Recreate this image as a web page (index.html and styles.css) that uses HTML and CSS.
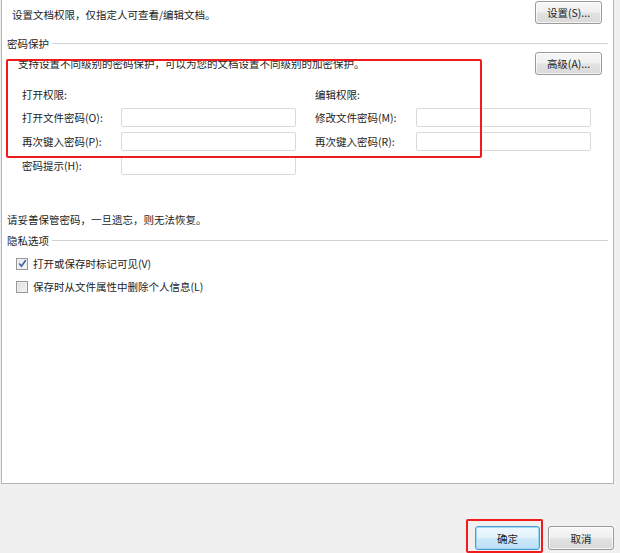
FILE: index.html
```html
<!DOCTYPE html>
<html lang="zh-CN">
<head>
<meta charset="utf-8">
<link rel="stylesheet" href="styles.css">
</head>
<body>
<div class="panel">
  <div class="top-row">
    <span class="txt">设置文档权限，仅指定人可查看/编辑文档。</span>
    <button class="btn">设置(S)...</button>
  </div>
  <div class="section-title sec1"><span>密码保护</span><i></i></div>
  <div class="pw-head">
    <span class="txt">支持设置不同级别的密码保护，可以为您的文档设置不同级别的加密保护。</span>
    <button class="btn">高级(A)...</button>
  </div>
  <div class="pw-grid">
    <span class="lbl">打开权限:</span><span></span><span></span><span class="lbl">编辑权限:</span><span></span>
    <span class="lbl">打开文件密码(O):</span><span class="inp"></span><span></span><span class="lbl">修改文件密码(M):</span><span class="inp"></span>
    <span class="lbl">再次键入密码(P):</span><span class="inp"></span><span></span><span class="lbl">再次键入密码(R):</span><span class="inp"></span>
    <span class="lbl">密码提示(H):</span><span class="inp"></span><span></span><span></span><span></span>
  </div>
  <div class="warn">请妥善保管密码，一旦遗忘，则无法恢复。</div>
  <div class="section-title sec2"><span>隐私选项</span><i></i></div>
  <label class="chk-row first"><span class="chk checked"><svg viewBox="0 0 9 9" width="9" height="9"><path d="M1.2 4.6 L3.4 7.2 L7.8 1.2" fill="none" stroke="#3a5f9e" stroke-width="1.6"/></svg></span><span>打开或保存时标记可见(V)</span></label>
  <label class="chk-row"><span class="chk"></span><span>保存时从文件属性中删除个人信息(L)</span></label>
  <div class="mark mark-pw"></div>
</div>
<div class="footer">
  <div class="ok-wrap">
    <button class="btn btn-default">确定</button>
    <div class="mark mark-ok"></div>
  </div>
  <button class="btn btn-cancel">取消</button>
</div>
</body>
</html>
```
FILE: styles.css
```css
* { box-sizing: border-box; }
html, body {
  margin: 0;
  padding: 0;
  background: #f0f0f0;
  font-family: "Noto Sans CJK SC", "Microsoft YaHei", sans-serif;
  font-size: 10.5px;
  color: #1c1c1c;
  width: 620px;
  height: 553px;
  overflow: hidden;
}
.panel {
  position: relative;
  margin-left: 1px;
  width: 613px;
  height: 484px;
  background: #ffffff;
  border-left: 1px solid #b4b4bc;
  border-right: 1px solid #b4b4bc;
  border-bottom: 1px solid #b4b4bc;
}
.btn {
  font-family: inherit;
  font-size: 10.5px;
  color: #1c1c1c;
  width: 67px;
  height: 23px;
  padding: 0;
  border: 1px solid #9a9a9a;
  border-radius: 3px;
  background: linear-gradient(#f7f7f7 0%, #f0f0f0 48%, #e3e3e3 52%, #d9d9d9 100%);
  box-shadow: inset 0 0 0 1px rgba(255,255,255,0.7);
}
.top-row {
  display: flex;
  justify-content: space-between;
  align-items: center;
  padding: 0 11px 0 10px;
  height: 25px;
}
.top-row .txt { padding-top: 3px; }
.section-title {
  display: flex;
  align-items: center;
  padding-left: 5px;
  padding-right: 5px;
  height: 16px;
}
.section-title i {
  flex: 1;
  height: 1px;
  background: #d3d3d3;
  margin-left: 3px;
}
.sec1 { margin-top: 10px; }
.pw-head {
  display: flex;
  justify-content: space-between;
  align-items: center;
  padding: 0 11px 0 16px;
  margin-top: 1px;
  height: 23px;
}
.pw-grid {
  display: grid;
  grid-template-columns: 99px 175px 19px 101px 175px;
  grid-template-rows: 18px 19px 19px 19px;
  row-gap: 5px;
  margin-left: 20px;
  margin-top: 10px;
}
.lbl {
  display: flex;
  align-items: center;
  white-space: nowrap;
}
.inp {
  border: 1px solid #d6d9de;
  border-radius: 2px;
  background: #fff;
}
.warn {
  padding-left: 5px;
  margin-top: 35px;
  height: 20px;
  line-height: 20px;
}
.sec2 { margin-top: 2px; }
.chk-row {
  display: flex;
  align-items: center;
  gap: 5px;
  padding-left: 14px;
  height: 23px;
}
.chk-row.first { margin-top: 4px; }
.chk {
  width: 12px;
  height: 12px;
  border: 1px solid #979797;
  background: linear-gradient(135deg, #dcdcdc 0%, #f4f4f4 100%);
  box-shadow: inset 0 0 0 1px #f0f0f0;
  display: flex;
  align-items: center;
  justify-content: center;
}
.chk.checked {
  background: linear-gradient(135deg, #e2e6ee 0%, #f6f8fb 100%);
}
.mark {
  position: absolute;
  border: 2px solid #f01c1c;
  border-radius: 2px;
  pointer-events: none;
}
.mark-pw {
  left: 4px;
  top: 59px;
  width: 476px;
  height: 99px;
}
.footer {
  display: flex;
  justify-content: flex-end;
  gap: 8px;
  padding-top: 42px;
  padding-right: 6px;
}
.ok-wrap { position: relative; }
.btn-default {
  width: 65px;
  height: 24px;
  border: 1px solid #4f9bd0;
  background: linear-gradient(#eef7fd 0%, #e1f2fc 48%, #cde9fa 52%, #bde0f6 100%);
  box-shadow: inset 0 0 0 1px #9fd7f5;
  display: block;
}
.btn-cancel {
  width: 66px;
  height: 24px;
}
.mark-ok {
  left: -9px;
  top: -7px;
  width: 77px;
  height: 34px;
}
```
